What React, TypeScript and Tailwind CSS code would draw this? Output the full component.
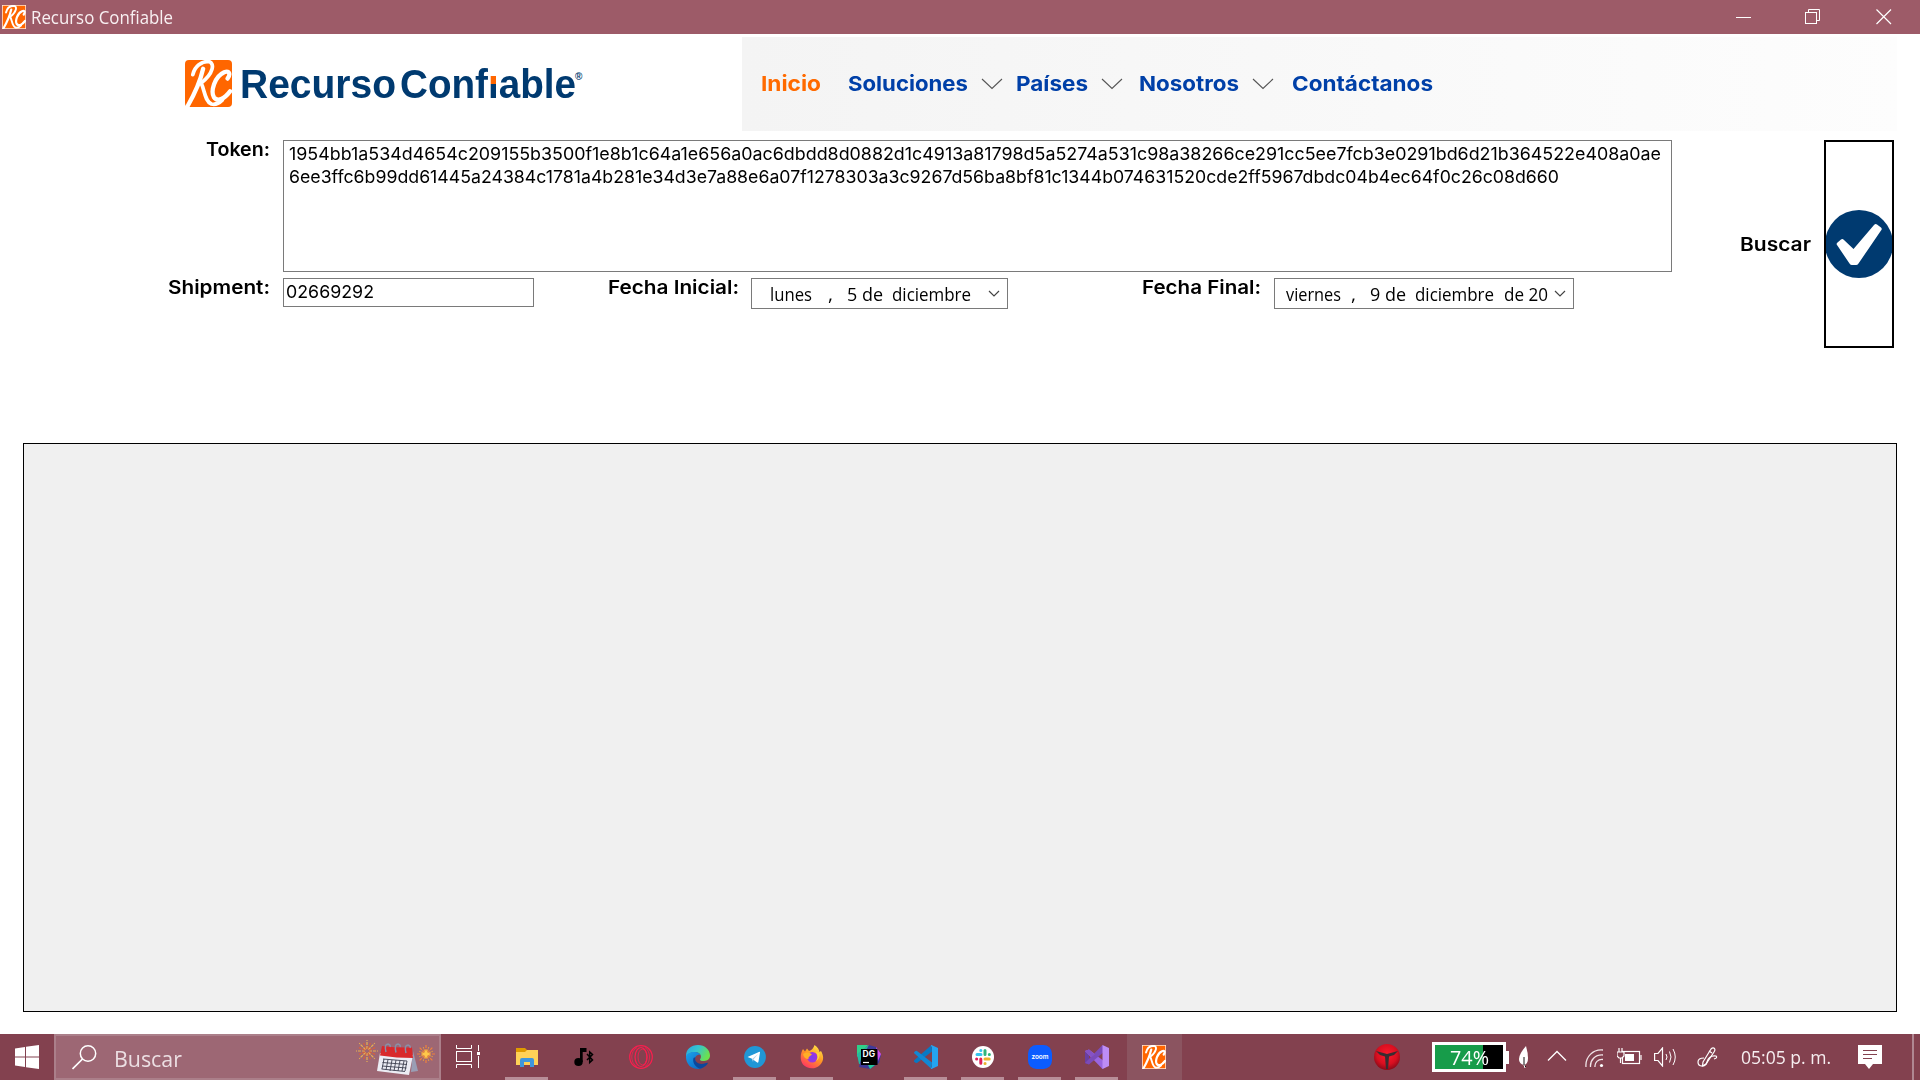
import React, { useLayoutEffect, useRef } from "react";

/** Single line of text, condensed or expanded so that it fills the given width. */
function Fit({ w, children, className = "" }: { w: number; children: React.ReactNode; className?: string }) {
  const ref = useRef<HTMLSpanElement>(null);
  useLayoutEffect(() => {
    const el = ref.current;
    if (!el) return;
    el.style.transform = "none";
    const natural = el.getBoundingClientRect().width;
    el.style.transform = `scaleX(${w / natural})`;
  }, [w]);
  return (
    <span className={`flex shrink-0 whitespace-pre ${className}`} style={{ width: w }}>
      <span ref={ref} className="block shrink-0 origin-left">
        {children}
      </span>
    </span>
  );
}

function RcIcon({ size, radius = 0, edge = false }: { size: number; radius?: number; edge?: boolean }) {
  return (
    <svg width={size} height={size} viewBox="0 0 48 48" className="shrink-0">
      <rect width="48" height="48" rx={radius} fill="#ff6600" stroke={edge ? "#ffe9dc" : "none"} strokeWidth="3" />
      <g fill="none" stroke="#fff" strokeLinecap="round" strokeLinejoin="round">
        <path d="M18.500 9C16 20 9 36 3 46.500" strokeWidth="4.400" />
        <path d="M8 15C10 6 17 1.500 24 1.500C31 3 29 14 16.500 23.500C20 30 20 42 27 45C31 46 35 44 38 41" strokeWidth="3.800" />
        <path d="M43.500 19C47 14 45 10.500 40 12.500C30 17 26 32 29.500 38C33 43 40 40 46 32" strokeWidth="4.400" />
      </g>
    </svg>
  );
}

function NavChevron({ className = "" }: { className?: string }) {
  return (
    <svg width="22" height="12" viewBox="0 0 22 12" className={`shrink-0 ${className}`}>
      <path d="M1 1L11 10.5L21 1" fill="none" stroke="#555" strokeWidth="1.1" />
    </svg>
  );
}

function ComboChevron() {
  return (
    <svg width="12" height="8" viewBox="0 0 12 8" className="shrink-0">
      <path d="M1 1L6 6L11 1" fill="none" stroke="#444" strokeWidth="1.2" />
    </svg>
  );
}

function TitleBar() {
  return (
    <header className="flex h-[34px] shrink-0 items-center bg-[#9d5b68] pl-[2px] text-white">
      <RcIcon size={24} edge />
      <Fit w={142} className="ml-[5px] font-['Open_Sans'] text-[17.5px] leading-[34px] text-[#f8f0f2]">Recurso Confiable</Fit>
      <div className="ml-auto flex items-center pr-[28px]">
        <svg width="16" height="16" viewBox="0 0 16 16" className="mr-[53px]">
          <path d="M0 8.5H15" stroke="#fff" />
        </svg>
        <svg width="16" height="16" viewBox="0 0 16 16" className="mr-[55px]" fill="none" stroke="#fff">
          <rect x=".5" y="3.5" width="11" height="11" />
          <path d="M3.5 3.5V.5H14.5V11.5H11.5" />
        </svg>
        <svg width="16" height="16" viewBox="0 0 16 16">
          <path d="M.5 .5L15 15M15 .5L.5 15" stroke="#fff" strokeWidth="1.2" />
        </svg>
      </div>
    </header>
  );
}

function Banner() {
  return (
    <div className="flex h-[97px] shrink-0 pt-[3px]">
      <div className="flex w-[742px] pl-[185px]">
        <div className="mt-[23px] h-[47px] w-[47px]">
          <RcIcon size={47} radius={4} />
        </div>
        <div className="ml-[8px] mt-[27px] flex font-['Liberation_Sans'] text-[40px] font-bold leading-[40px] text-[#003a70]">
          <Fit w={156}>Recurso</Fit>
          <Fit w={176} className="ml-[4px]">
            Conf
            <span className="bg-[linear-gradient(#0000_0_14px,#ff6600_14px_22px,#003a70_22px)] bg-clip-text text-transparent">i</span>
            able
          </Fit>
          <span className="-ml-px text-[10px] leading-[26px]">®</span>
        </div>
      </div>
      <nav className="flex h-[94px] w-[1155px] items-center bg-linear-to-r from-[#f4f4f4] to-[#fdfdfd] pl-[19px] font-['Inter'] text-[20.5px] font-bold leading-[30px] text-[#0040a8]">
        <Fit w={60} className="text-[#ff6a00]">Inicio</Fit>
        <Fit w={120} className="ml-[27px]">Soluciones</Fit>
        <NavChevron className="ml-[13px]" />
        <Fit w={72} className="ml-[13px]">Países</Fit>
        <NavChevron className="ml-[13px]" />
        <Fit w={100} className="ml-[16px]">Nosotros</Fit>
        <NavChevron className="ml-[13px]" />
        <Fit w={141} className="ml-[18px]">Contáctanos</Fit>
      </nav>
    </div>
  );
}

const label = "font-['Inter'] text-[19px] font-semibold leading-[19px] text-black";

function SearchForm() {
  return (
    <section className="mt-[9px] flex h-[208px] shrink-0">
      <div className="flex w-[1672px] flex-col gap-[6px]">
        <div className="flex h-[132px]">
          <div className="flex w-[283px] items-start justify-end pr-[13px]">
            <Fit w={64} className={label}>Token:</Fit>
          </div>
          <div className="flex flex-1 flex-col items-start border border-[#7a7a7a] pl-[5px] pt-px font-['Inter'] text-[17.5px] leading-[23px] text-black">
            <Fit w={1372}>1954bb1a534d4654c209155b3500f1e8b1c64a1e656a0ac6dbdd8d0882d1c4913a81798d5a5274a531c98a38266ce291cc5ee7fcb3e0291bd6d21b364522e408a0ae</Fit>
            <Fit w={1270}>6ee3ffc6b99dd61445a24384c1781a4b281e34d3e7a88e6a07f1278303a3c9267d56ba8bf81c1344b074631520cde2ff5967dbdc04b4ec64f0c26c08d660</Fit>
          </div>
        </div>
        <div className="flex items-start">
          <div className="flex w-[283px] items-start justify-end pr-[13px]">
            <Fit w={102} className={label}>Shipment:</Fit>
          </div>
          <div className="h-[29px] w-[251px] border border-[#7a7a7a] pl-[2px] font-['Inter'] text-[17.5px] leading-[26px] text-black">
            <Fit w={88}>02669292</Fit>
          </div>
          <div className="flex w-[217px] items-start justify-end pr-[12px]">
            <Fit w={131} className={label}>Fecha Inicial:</Fit>
          </div>
          <div className="flex h-[31px] w-[257px] items-center border border-[#7a7a7a] pl-[18px] pt-px font-['Open_Sans'] text-[18px] leading-[28px] text-black">
            <Fit w={42}>lunes</Fit>
            <Fit w={5} className="ml-[16px]">,</Fit>
            <Fit w={36} className="ml-[14px]">5 de</Fit>
            <Fit w={79} className="ml-[9px]">diciembre</Fit>
            <span className="ml-[17px] flex">
              <ComboChevron />
            </span>
          </div>
          <div className="flex w-[266px] items-start justify-end pr-[13px]">
            <Fit w={119} className={label}>Fecha Final:</Fit>
          </div>
          <div className="flex h-[31px] w-[300px] items-center border border-[#7a7a7a] pl-[11px] pt-px font-['Open_Sans'] text-[18px] leading-[28px] text-black">
            <Fit w={55}>viernes</Fit>
            <Fit w={5} className="ml-[10px]">,</Fit>
            <Fit w={36} className="ml-[14px]">9 de</Fit>
            <Fit w={79} className="ml-[9px]">diciembre</Fit>
            <Fit w={44} className="ml-[10px]">de 20</Fit>
            <span className="ml-[6px] flex">
              <ComboChevron />
            </span>
          </div>
        </div>
      </div>
      <div className="flex flex-1 items-center pl-[68px]">
        <Fit w={71} className={label}>Buscar</Fit>
        <button className="ml-[13px] flex h-[208px] w-[70px] items-center justify-center border-2 border-black bg-white">
          <svg width="66" height="68" viewBox="1 0 66 68">
            <circle cx="34" cy="34" r="34" fill="#003a70" />
            <path d="M12 35Q11 34 12.500 32.500L16 29.500Q17.500 28.500 19 30L28.500 39L49 15Q50.500 13.500 52 14.500L56 17.500Q57.500 19 56 20.500L33.500 53.500Q32.500 55 31 55H27Q25.500 55 24.500 53.500Z" fill="#fff" />
          </svg>
        </button>
      </div>
    </section>
  );
}

function Rays({ cx, cy, r, n, colors }: { cx: number; cy: number; r: number; n: number; colors: string[] }) {
  return (
    <g strokeWidth="1.2" strokeDasharray="3 1">
      {Array.from({ length: n }, (_, i) => {
        const a = (i * 2 * Math.PI) / n;
        const q = i % 2 ? r * 0.8 : r;
        return (
          <path
            key={i}
            d={`M${cx + Math.cos(a) * 2} ${cy + Math.sin(a) * 2}L${cx + Math.cos(a) * q} ${cy + Math.sin(a) * q}`}
            stroke={colors[i % colors.length]}
          />
        );
      })}
    </g>
  );
}

function CalendarArt() {
  return (
    <svg width="80" height="40" viewBox="0 0 80 40" className="shrink-0">
      <Rays cx={12} cy={14} r={11} n={16} colors={["#e8b050", "#d8603c"]} />
      <Rays cx={71} cy={17} r={9} n={16} colors={["#f0803c", "#e8a040"]} />
      <path d="M71 12L72.500 15.500L76 17L72.500 18.500L71 22L69.500 18.500L66 17L69.500 15.500Z" fill="#ffc84a" />
      <path d="M58 14L63 34L56 35Z" fill="#9a9db4" />
      <path d="M25 16L58 18L54 38L22 34Z" fill="#ececf4" />
      <path d="M27 9Q42 11 57 10.500L58 21Q42 21 25 18.500Z" fill="#d8292c" />
      <g stroke="#3d4050" strokeWidth=".9" fill="none">
        <path d="M28 22L52 24M27.500 25.500L52 27.500M27 29L51.500 31M26.500 32L50 34.500M29 22L27 32M33 22.500L31 33M37 23L35 34M41 23L39 34M45 23.500L43 34M49 24L47 34M52 24L50 34" />
      </g>
      <g stroke="#8890a8" strokeWidth="1.500" fill="none">
        <path d="M31 15Q29 7 33 7Q36 8 35 10M41 15.500Q39 7 43 7Q46 8 45 10M51 16Q49 8 53 8Q56 9 55 11" />
      </g>
    </svg>
  );
}

const S = "shrink-0";

function TaskView() {
  return (
    <svg width="25" height="24" viewBox="0 0 25 24" className={S} fill="none" stroke="#fff">
      <path d="M.5 0V3.500H15.500V0M.5 23V19.500H15.500V23M22.500 0V6M22.500 11V23" />
      <rect x=".5" y="6.500" width="15" height="10" />
      <rect x="21" y="7" width="3" height="3" fill="#fff" stroke="none" />
    </svg>
  );
}

function Explorer() {
  return (
    <svg width="24" height="24" viewBox="0 0 24 24" className={S}>
      <path d="M1 3H10L12 5V9H1Z" fill="#e09b00" />
      <path d="M1 7H10L12 5H23V20H1Z" fill="#ffd257" />
      <path d="M5 22V15Q5 13 7 13H17Q19 13 19 15V22H15V17H9V22Z" fill="#3f97dc" />
    </svg>
  );
}

function MusicBluetooth() {
  return (
    <svg width="24" height="24" viewBox="0 0 24 24" className={S}>
      <ellipse cx="6.500" cy="17" rx="4.200" ry="4" fill="#000" />
      <path d="M8 3H14.500V7H10.700V17H8Z" fill="#000" />
      <path d="M15 9L20.500 15L17.700 17.500V7L20.500 9.500L15 15" fill="none" stroke="#000" strokeWidth="1.500" />
    </svg>
  );
}

function Opera() {
  return (
    <svg width="24" height="24" viewBox="0 0 24 24" className={S} fill="none" stroke="#fa1e4e">
      <circle cx="12" cy="12" r="11.300" strokeWidth="1.200" />
      <ellipse cx="12" cy="12" rx="6" ry="9.500" strokeWidth="1.200" />
      <ellipse cx="13.500" cy="12" rx="4.500" ry="8" strokeWidth=".8" />
      <path d="M8 2.500C1 6 1 18 8 21.500M16 2.500C22 6 22 18 16 21.500" strokeWidth=".8" />
    </svg>
  );
}

function Edge() {
  return (
    <svg width="24" height="24" viewBox="0 0 24 24" className={S}>
      <defs>
        <linearGradient id="edgeTop" x1="0" y1="0" x2="1" y2=".4">
          <stop offset="0" stopColor="#2aa6e0" />
          <stop offset=".5" stopColor="#35c4d0" />
          <stop offset="1" stopColor="#6be04f" />
        </linearGradient>
        <linearGradient id="edgeLeft" x1="0" y1="0" x2="1" y2="1">
          <stop offset="0" stopColor="#1aa2ea" />
          <stop offset="1" stopColor="#0a5fc0" />
        </linearGradient>
      </defs>
      <path d="M0 11C0 4 5 0 12 0C19 0 24 5 24 10.500C24 15 20 16 17 16C14 16 13.500 14.800 14.500 13.500C16 11 14 7 9 7C4 7 0 10 0 14Z" fill="url(#edgeTop)" />
      <path d="M0 12C0 9 4 6.500 9 7C12 7.200 14 8.500 14.500 10C11 9 8.500 12 9 15C10 20 16 21 20 19C18 22 15 24 12 24C5 24 0 19 0 12Z" fill="url(#edgeLeft)" />
      <path d="M7.500 13C6 18 10 22.500 14 23.700C18 23 21 20 22 18C21.500 17 17 20 13 18.500C9.500 17 8.500 15 9.500 12Z" fill="#0c479b" />
    </svg>
  );
}

function Telegram() {
  return (
    <svg width="24" height="24" viewBox="0 0 24 24" className={S}>
      <circle cx="12" cy="12" r="10.900" fill="#2097d6" />
      <path d="M4.500 12L16.500 6.800Q17.300 6.800 17 7.600L15.400 17Q15 18 14.200 17.500L8.500 13.500Z" fill="#fff" />
      <path d="M9 14L15 9L10.500 14.500L10 17Z" fill="#b8d4e8" />
    </svg>
  );
}

function Firefox() {
  return (
    <svg width="24" height="24" viewBox="0 0 24 24" className={S}>
      <defs>
        <linearGradient id="fox" x1=".8" y1="0" x2=".2" y2="1">
          <stop offset="0" stopColor="#ffe84a" />
          <stop offset=".45" stopColor="#ff9a22" />
          <stop offset="1" stopColor="#ff2d68" />
        </linearGradient>
        <radialGradient id="foxGlobe">
          <stop offset="0" stopColor="#7a3df0" />
          <stop offset="1" stopColor="#a334d8" />
        </radialGradient>
      </defs>
      <path d="M3 4L5 6.500L7 3.500L9 6Q13 5 14.500 0C18 2 19 5 19.500 7L21 6C24 11 24 16 20 20C15 25 7 24 3 19.500C-.5 15 .5 8 3 4Z" fill="url(#fox)" />
      <circle cx="12.300" cy="12.300" r="5.300" fill="url(#foxGlobe)" />
      <path d="M3 9Q8 6 12 9.500L10 11Q8 12 8.500 14Q4 14 3 9Z" fill="#ffae26" />
      <path d="M16 7Q19 12 16 16Q20 14 19.500 8Z" fill="#ffd43c" />
    </svg>
  );
}

function DataGrip() {
  return (
    <svg width="24" height="24" viewBox="0 0 24 24" className={S}>
      <path d="M0 0H11L0 12Z" fill="#2fd08a" />
      <path d="M0 9L12 0L8 20L2 19Z" fill="#24b9a0" />
      <path d="M12 0L19 2L24 10L22 18L13 24L2 22L4 14Z" fill="#3f3a98" />
      <path d="M19 2L24 9L21 16Z" fill="#d04df0" />
      <path d="M11 20H18L13 24Z" fill="#26c59a" />
      <rect x="4" y="4" width="16.500" height="16" fill="#000" />
      <text x="5.500" y="12" fontFamily="Inter" fontWeight="700" fontSize="8.500" fill="#fff">DG</text>
      <path d="M6 17.500H12" stroke="#fff" strokeWidth="1.200" />
    </svg>
  );
}

function VsCode() {
  return (
    <svg width="24" height="24" viewBox="0 0 24 24" className={S}>
      <path d="M17.500 0L18 6.500L3 18Q2 18.500 0 16.500Q-.3 16 .5 15Z" fill="#0879c4" />
      <path d="M.5 8.500Q-.3 8 0 7.500Q1.500 5 3 6L18 17.500L17.500 24Z" fill="#1088d4" />
      <path d="M17.500 0L24 3V21L17.500 24Q16 24 18 22V2Q16 0 17.500 0Z" fill="#24a4f0" />
    </svg>
  );
}

function Slack() {
  return (
    <svg width="24" height="24" viewBox="0 0 24 24" className={S}>
      <circle cx="12" cy="12" r="11" fill="#fff" />
      <g strokeWidth="3" strokeLinecap="round">
        <path d="M6 9.500H10M9.800 5.600H9.900" stroke="#36c5f0" />
        <path d="M14 5.500V9.500M18.300 9.600H18.400" stroke="#2eb67d" />
        <path d="M14 14H18.200M14 18.400H14.100" stroke="#ecb22e" />
        <path d="M9.800 14V18.300M5.600 14.100H5.700" stroke="#e01e5a" />
      </g>
    </svg>
  );
}

function Zoom() {
  return (
    <svg width="24" height="24" viewBox="0 0 24 24" className={S}>
      <rect width="24" height="24" rx="8.500" fill="#0b5cff" />
      <text x="3.500" y="14" textLength="17" lengthAdjust="spacingAndGlyphs" fontFamily="Inter" fontWeight="600" fontSize="7" fill="#fff">zoom</text>
    </svg>
  );
}

function VisualStudio() {
  return (
    <svg width="24" height="24" viewBox="0 0 24 24" className={S}>
      <path d="M0 6L4 4.500V19.500L0 18Z" fill="#6a3fa0" />
      <path d="M0 6L4 4.500L20 17V22L17.500 24Z" fill="#9a66e0" />
      <path d="M17.500 0L20 6L4 19.500L0 18Z" fill="#7b4bb8" />
      <path d="M17.500 0L24 3V21L17.500 24Z" fill="#bd8df5" />
      <path d="M0 6L4 4.500L10 9.500L6.500 12Z" fill="#8552c4" />
    </svg>
  );
}

function TaskCell({ children, line }: { children: React.ReactNode; line?: boolean }) {
  return (
    <div className="flex w-[57px] flex-col items-center pt-[11px]">
      {children}
      {line && <div className="mt-auto h-[3px] w-[43px] bg-[#b88e98]" />}
    </div>
  );
}

function Tray() {
  return (
    <div className="ml-auto flex items-center">
      <svg width="26" height="26" viewBox="0 0 26 26" className={S}>
        <defs>
          <radialGradient id="redBall" cx=".5" cy=".4" r=".6">
            <stop offset="0" stopColor="#ff1a2c" />
            <stop offset=".65" stopColor="#d80f20" />
            <stop offset="1" stopColor="#8a0a18" />
          </radialGradient>
        </defs>
        <circle cx="13" cy="13" r="13" fill="url(#redBall)" />
        <path d="M2 7L13 10L24 7L20 11L15 12.500L14 25H12L11 12.500L6 11Z" fill="#3a2c30" />
      </svg>
      <div className="ml-[32px] flex h-[30px] w-[74px] items-center justify-center border-[3px] border-white bg-[linear-gradient(90deg,#179c4a_48px,#000_48px)]">
        <Fit w={39} className="pt-[2px] font-['Open_Sans'] text-[19.5px] leading-[24px] text-white">74%</Fit>
      </div>
      <div className="h-[13px] w-[3px] bg-white" />
      <svg width="12" height="24" viewBox="0 0 12 24" className="ml-[9px] shrink-0">
        <path d="M8 1Q10 8 10 13Q10 19 6 20Q1 19 1 14Q1 9 8 1Z" fill="#fff" />
        <path d="M6 12V20L8 22" stroke="#111" fill="none" />
        <path d="M6 20L7 23" stroke="#fff" />
      </svg>
      <svg width="20" height="12" viewBox="0 0 20 12" className="ml-[17px] mb-[2px] shrink-0">
        <path d="M1 10.500L10 1.500L19 10.500" stroke="#fff" strokeWidth="1.300" fill="none" />
      </svg>
      <svg width="19" height="19" viewBox="0 0 19 19" className="ml-[18px] mt-[3px] shrink-0" fill="none" stroke="#f0e4e7" strokeWidth="1.300">
        <path d="M1 18C0 8 8 0 18 1M5.500 18C5 11 10 5.500 18 6M10 18C9.500 13.500 13 10 18 10.500" />
        <circle cx="16.500" cy="16.500" r="1.600" fill="#fff" stroke="none" />
      </svg>
      <svg width="25" height="18" viewBox="0 0 25 18" className="ml-[13px] shrink-0" fill="none" stroke="#fff" strokeWidth="1.200">
        <rect x="5.500" y="3.500" width="17" height="12" />
        <path d="M24 7V12" />
        <rect x="8" y="6" width="9" height="7" fill="#fff" stroke="none" />
        <path d="M0 4H7V8L5 10H2L0 8Z" fill="#83414f" />
        <path d="M2 0V4M5 0V4M3.500 10V15" />
      </svg>
      <svg width="24" height="20" viewBox="0 0 24 20" className="ml-[12px] shrink-0" fill="none" stroke="#fff" strokeWidth="1.200">
        <path d="M.6 6.500H4L8.500 1V19L4 13.500H.6Z" />
        <path d="M12 7Q14 10 12 13M15.500 4.500Q18.500 10 15.500 15.500M19 2Q23.500 10 19 18" strokeWidth="1" />
      </svg>
      <svg width="21" height="21" viewBox="0 0 21 21" className="ml-[19px] shrink-0" fill="none" stroke="#fff" strokeWidth="1.200">
        <path d="M6 15L14 2Q16 0 17.500 1.500Q18.500 3 17 5L9 17L5.500 19Z" />
        <path d="M12 4L15 6M7 11Q1 11 1 15Q1 19 5 19Q9 19 10 15Q12 8 19 9Q21 11 17 12" />
      </svg>
      <Fit w={90} className="ml-[23px] font-['Open_Sans'] text-[18.5px] leading-[46px] text-[#f6eef0]">05:05 p. m.</Fit>
      <svg width="24" height="25" viewBox="0 0 24 25" className="ml-[27px] shrink-0">
        <path d="M0 0H24V19H15L11 24L7 19H0Z" fill="#fff" />
        <path d="M5 5.500H19M5 9.500H19M5 13.500H14" stroke="#83414f" />
      </svg>
      <div className="ml-[30px] mr-[6px] h-[46px] w-[2px] bg-[#b08792]" />
    </div>
  );
}

function Taskbar() {
  return (
    <footer className="flex h-[46px] shrink-0 bg-[#83414f]">
      <div className="flex w-[54px] items-center pl-[15px]">
        <svg width="24" height="24" viewBox="0 0 24 24" fill="#fff">
          <path d="M0 3.400L10 2V11.400H0ZM11 1.800L24 0V11.400H11ZM0 12.400H10V22L0 20.600ZM11 12.400H24V24L11 22.200Z" />
        </svg>
      </div>
      <div className="flex w-[387px] items-center border-2 border-[#ab7f8a] bg-[#9d6774] pl-[16px]">
        <svg width="25" height="25" viewBox="0 0 25 25" className={S}>
          <circle cx="16" cy="8.500" r="7.700" fill="none" stroke="#fff" strokeWidth="1.500" />
          <path d="M10.500 14L.5 24" stroke="#fff" strokeWidth="1.700" />
        </svg>
        <Fit w={68} className="ml-[17px] pt-[3px] font-['Open_Sans'] text-[22.5px] leading-[34px] text-[#ecdfe3]">Buscar</Fit>
        <div className="ml-[173px]">
          <CalendarArt />
        </div>
      </div>
      <div className="flex w-[57px] pl-[15px] pt-[11px]">
        <TaskView />
      </div>
      <TaskCell line><Explorer /></TaskCell>
      <TaskCell><MusicBluetooth /></TaskCell>
      <TaskCell><Opera /></TaskCell>
      <TaskCell><Edge /></TaskCell>
      <TaskCell line><Telegram /></TaskCell>
      <TaskCell line><Firefox /></TaskCell>
      <TaskCell><DataGrip /></TaskCell>
      <TaskCell line><VsCode /></TaskCell>
      <TaskCell line><Slack /></TaskCell>
      <TaskCell line><Zoom /></TaskCell>
      <TaskCell line><VisualStudio /></TaskCell>
      <div className="ml-[2px] flex w-[55px] bg-[#8b5460] pl-[15px] pt-[11px]">
        <RcIcon size={24} edge />
      </div>
      <Tray />
    </footer>
  );
}

export default function App() {
  return (
    <div className="flex h-[1080px] w-[1920px] flex-col overflow-hidden bg-white font-['Inter',sans-serif]">
      <TitleBar />
      <Banner />
      <SearchForm />
      <main className="mx-[23px] mt-[95px] h-[569px] shrink-0 border border-black bg-[#f0f0f0]" />
      <div className="flex-1" />
      <Taskbar />
    </div>
  );
}
